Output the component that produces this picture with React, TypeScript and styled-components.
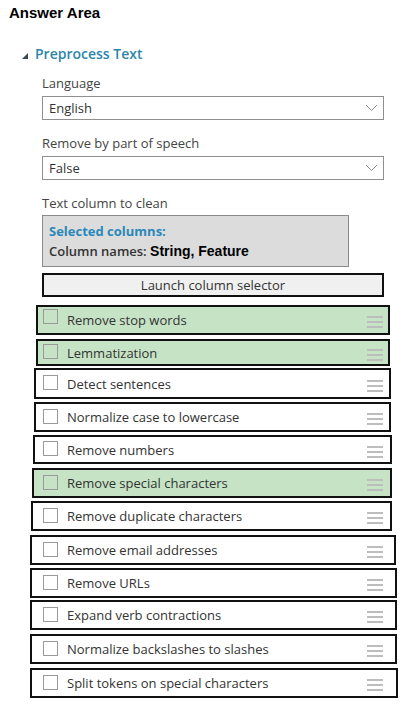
import React from "react";
import styled, { createGlobalStyle } from "styled-components";

type Step = {
  label: string;
  active?: boolean;
  top: number;
  left: number;
  right: number;
  height: number;
};

// outer box coordinates measured from the screenshot
const steps: Step[] = [
  { label: "Remove stop words", active: true, top: 305, left: 36, right: 390, height: 30 },
  { label: "Lemmatization", active: true, top: 339, left: 36, right: 390, height: 27 },
  { label: "Detect sentences", top: 368, left: 34, right: 391, height: 31 },
  { label: "Normalize case to lowercase", top: 402, left: 34, right: 391, height: 30 },
  { label: "Remove numbers", top: 435, left: 33, right: 392, height: 29 },
  { label: "Remove special characters", active: true, top: 468, left: 32, right: 392, height: 30 },
  { label: "Remove duplicate characters", top: 501, left: 31, right: 392, height: 30 },
  { label: "Remove email addresses", top: 535, left: 30, right: 396, height: 30 },
  { label: "Remove URLs", top: 568, left: 30, right: 397, height: 30 },
  { label: "Expand verb contractions", top: 600, left: 30, right: 397, height: 30 },
  { label: "Normalize backslashes to slashes", top: 634, left: 30, right: 397, height: 30 },
  { label: "Split tokens on special characters", top: 668, left: 30, right: 398, height: 30 },
];

const Chevron = () => (
  <svg width="13" height="8" viewBox="0 0 13 8">
    <polyline points="1,1 6.5,6.5 12,1" fill="none" stroke="#8a8a8a" strokeWidth="1" />
  </svg>
);

const App = () => {
  return (
    <>
      <GlobalStyle />
      <Page>
        <Title>Answer Area</Title>

        <SectionHeader>
          <Caret />
          Preprocess Text
        </SectionHeader>

        <Form>
          <FieldLabel $gap={11}>Language</FieldLabel>
          <Select>
            English
            <Chevron />
          </Select>

          <FieldLabel $gap={14}>Remove by part of speech</FieldLabel>
          <Select>
            False
            <Chevron />
          </Select>

          <FieldLabel $gap={14}>Text column to clean</FieldLabel>
          <ColumnBox>
            <BoxTitle>Selected columns:</BoxTitle>
            <BoxLine>
              Column names: <Strong>String, Feature</Strong>
            </BoxLine>
          </ColumnBox>
          <LaunchButton>Launch column selector</LaunchButton>
        </Form>

        <StepList>
          {steps.map((s, i) => {
            const prevBottom = i === 0 ? 297 : steps[i - 1].top + steps[i - 1].height;
            return (
              <StepRow
                key={s.label}
                $active={!!s.active}
                $gap={s.top - prevBottom}
                $left={s.left}
                $right={s.right}
                $height={s.height}
              >
                <CheckBox $lift={i === 0 ? 4 : 1} />
                <StepText>{s.label}</StepText>
                <Handle>
                  <span />
                  <span />
                  <span />
                </Handle>
              </StepRow>
            );
          })}
        </StepList>
      </Page>
    </>
  );
};

export default App;

const GlobalStyle = createGlobalStyle`
  html, body {
    margin: 0;
    padding: 0;
    background: #fff;
  }
  * {
    box-sizing: border-box;
  }
`;

const Page = styled.div`
  width: 409px;
  height: 709px;
  padding: 4px 0 0;
  font-family: "Open Sans", "Noto Sans", sans-serif;
  color: #333;
  overflow: hidden;
`;

const Title = styled.div`
  padding-left: 9px;
  font-family: "Liberation Sans", Arial, sans-serif;
  font-weight: 700;
  font-size: 15px;
  line-height: 18px;
  color: #000;
`;

const SectionHeader = styled.div`
  display: flex;
  align-items: center;
  gap: 7px;
  margin-top: 23px;
  padding-left: 22px;
  font-size: 14px;
  line-height: 18px;
  font-weight: 600;
  color: #2d86aa;
`;

const Caret = styled.span`
  width: 0;
  height: 0;
  margin-top: 3px;
  border-left: 6px solid transparent;
  border-bottom: 6px solid #3a4a55;
`;

const Form = styled.div`
  display: flex;
  flex-direction: column;
  padding-left: 42px;
  width: 384px;
`;

const FieldLabel = styled.div<{ $gap: number }>`
  margin-top: ${(p) => p.$gap}px;
  font-size: 13px;
  line-height: 18px;
  color: #444;
`;

const Select = styled.div`
  display: flex;
  align-items: center;
  justify-content: space-between;
  margin-top: 4px;
  height: 24px;
  padding: 0 5px 0 6px;
  border: 1px solid #8f8f8f;
  font-size: 13px;
  color: #333;
`;

const ColumnBox = styled.div`
  margin-top: 3px;
  width: 307px;
  height: 52px;
  padding: 3px 6px;
  background: #dcdcdc;
  border: 1px solid #8a8a8a;
  display: flex;
  flex-direction: column;
  justify-content: center;
  gap: 2px;
`;

const BoxTitle = styled.div`
  font-size: 13px;
  line-height: 18px;
  font-weight: 700;
  color: #2a88b9;
`;

const BoxLine = styled.div`
  font-size: 13px;
  line-height: 18px;
  font-weight: 600;
  color: #333;
`;

const Strong = styled.span`
  font-family: "Liberation Sans", Arial, sans-serif;
  font-weight: 700;
  font-size: 14px;
  color: #000;
`;

const LaunchButton = styled.div`
  margin-top: 6px;
  height: 24px;
  display: flex;
  align-items: center;
  justify-content: center;
  background: #f0f0f0;
  border: 2px solid #111;
  font-size: 13px;
  color: #333;
`;

const StepList = styled.div`
  display: flex;
  flex-direction: column;
`;

const StepRow = styled.div<{
  $active: boolean;
  $gap: number;
  $left: number;
  $right: number;
  $height: number;
}>`
  display: flex;
  align-items: center;
  margin-top: ${(p) => p.$gap}px;
  margin-left: ${(p) => p.$left}px;
  width: ${(p) => p.$right - p.$left}px;
  height: ${(p) => p.$height}px;
  padding-left: ${(p) => 43 - p.$left - 2}px;
  padding-right: ${(p) => p.$right - 383 - 2}px;
  background: ${(p) => (p.$active ? "#c6e3c5" : "#fff")};
  border: 2px solid #111;
`;

const CheckBox = styled.span<{ $lift: number }>`
  flex: none;
  width: 15px;
  height: 15px;
  margin-top: -${(p) => p.$lift * 2}px;
  border: 1px solid #9a9a9a;
  background: transparent;
`;

const StepText = styled.span`
  flex: 1;
  margin-left: 9px;
  font-size: 13px;
  line-height: 18px;
  color: #333;
  white-space: nowrap;
`;

const Handle = styled.span`
  display: flex;
  flex-direction: column;
  gap: 3px;
  margin-top: 4px;
  width: 16px;

  span {
    display: block;
    height: 2px;
    background: #bdbdbd;
  }
`;
